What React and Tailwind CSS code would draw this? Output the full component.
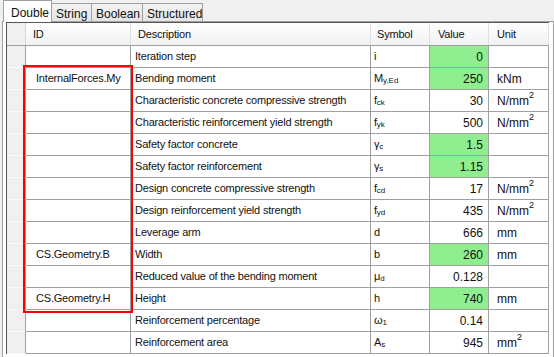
import React from "react";

const rows = [
  { id: "", desc: "Iteration step", sym: ["i", ""], val: "0", unit: "", green: true },
  { id: "InternalForces.My", desc: "Bending moment", sym: ["M", "y,Ed"], val: "250", unit: "kNm", green: true },
  { id: "", desc: "Characteristic concrete compressive strength", sym: ["f", "ck"], val: "30", unit: "N/mm", sup: true },
  { id: "", desc: "Characteristic reinforcement yield strength", sym: ["f", "yk"], val: "500", unit: "N/mm", sup: true },
  { id: "", desc: "Safety factor concrete", sym: ["γ", "c"], val: "1.5", unit: "", green: true },
  { id: "", desc: "Safety factor reinforcement", sym: ["γ", "s"], val: "1.15", unit: "", green: true },
  { id: "", desc: "Design concrete compressive strength", sym: ["f", "cd"], val: "17", unit: "N/mm", sup: true },
  { id: "", desc: "Design reinforcement yield strength", sym: ["f", "yd"], val: "435", unit: "N/mm", sup: true },
  { id: "", desc: "Leverage arm", sym: ["d", ""], val: "666", unit: "mm" },
  { id: "CS.Geometry.B", desc: "Width", sym: ["b", ""], val: "260", unit: "mm", green: true },
  { id: "", desc: "Reduced value of the bending moment", sym: ["μ", "d"], val: "0.128", unit: "" },
  { id: "CS.Geometry.H", desc: "Height", sym: ["h", ""], val: "740", unit: "mm", green: true },
  { id: "", desc: "Reinforcement percentage", sym: ["ω", "1"], val: "0.14", unit: "" },
  { id: "", desc: "Reinforcement area", sym: ["A", "s"], val: "945", unit: "mm", sup: true },
];

const font = { fontFamily: '"Liberation Sans", Arial, sans-serif' };

export default function App() {
  return (
    <div
      className="w-[554px] h-[357px] bg-[#f0f0f0] overflow-hidden text-[11px] text-[#111] tracking-[-0.2px]"
      style={font}
    >
      {/* Tabs */}
      <div className="flex items-end h-[21px] pl-[3px] relative z-10">
        <div className="h-[22px] w-[49px] bg-white border border-b-0 border-[#a0a0a0] pl-[7px] pt-[3px] -mb-[1px] text-[12px] tracking-normal">
          Double
        </div>
        <div className="h-[18px] w-[40px] bg-gradient-to-b from-[#f3f3f3] to-[#e4e4e4] border border-l-0 border-b-0 border-[#a0a0a0] pl-[4px] pt-[1px] text-[12px] tracking-normal">
          String
        </div>
        <div className="h-[18px] w-[51px] bg-gradient-to-b from-[#f3f3f3] to-[#e4e4e4] border border-l-0 border-b-0 border-[#a0a0a0] pl-[4px] pt-[1px] text-[12px] tracking-normal">
          Boolean
        </div>
        <div className="h-[18px] w-[60px] bg-gradient-to-b from-[#f3f3f3] to-[#e4e4e4] border border-l-0 border-b-0 border-[#a0a0a0] pl-[4px] pt-[1px] text-[12px] tracking-normal">
          Structured
        </div>
      </div>

      {/* Panel */}
      <div className="ml-[2px] mr-0 h-[336px] bg-white border border-b-0 border-[#a0a0a0] pl-[3px] pr-[4px]">
        <div className="relative border-l border-t border-[#555] w-[543px]">
          {/* Header */}
          <div className="flex h-[23px] border-b border-[#a0a0a0] bg-gradient-to-b from-white to-[#f0f1f3]">
            <div className="w-[19px] border-r border-[#d5d5d5] bg-[#f0f0f0]" />
            <div className="w-[105px] border-r border-[#e0e0e0] pl-[7px] flex items-center">ID</div>
            <div className="w-[240px] border-r border-[#e0e0e0] pl-[7px] flex items-center">Description</div>
            <div className="w-[59px] border-r border-[#e0e0e0] pl-[6px] flex items-center">Symbol</div>
            <div className="w-[59px] border-r border-[#e0e0e0] pl-[8px] flex items-center">Value</div>
            <div className="w-[60px] border-r border-[#e0e0e0] pl-[8px] flex items-center">Unit</div>
          </div>
          {rows.map((r, i) => (
            <div key={i} className="flex h-[22px] border-b border-[#a0a0a0]">
              <div className="w-[19px] -mb-[1px] border-b border-[#fafafa] border-r border-r-[#a0a0a0] bg-[#f0f0f0]" />
              <div className="w-[105px] border-r border-[#a0a0a0] pl-[10px] flex items-center">{r.id}</div>
              <div className="w-[240px] border-r border-[#a0a0a0] pl-[4px] flex items-center whitespace-nowrap">{r.desc}</div>
              <div className="w-[59px] border-r border-[#a0a0a0] pl-[3px] flex items-center whitespace-nowrap">
                <span>{r.sym[0]}</span>
                {r.sym[1] && <span className="text-[8px] relative top-[2px] tracking-normal">{r.sym[1]}</span>}
              </div>
              <div
                className={
                  "w-[59px] border-r border-[#a0a0a0] pr-[5px] flex items-center justify-end text-[12px] tracking-normal " +
                  (r.green ? "bg-[#90ee90]" : "")
                }
              >
                {r.val}
              </div>
              <div className="w-[60px] border-r border-[#a0a0a0] pl-[8px] flex items-center whitespace-nowrap text-[12px] tracking-normal">
                {r.unit}
                {r.sup && <span className="text-[9px] relative -top-[5px]">2</span>}
              </div>
            </div>
          ))}
          {/* Red highlight box */}
          <div className="absolute left-[16px] top-[42px] w-[110px] h-[248px] border-2 border-[#ff0000] pointer-events-none" />
        </div>
      </div>
    </div>
  );
}
